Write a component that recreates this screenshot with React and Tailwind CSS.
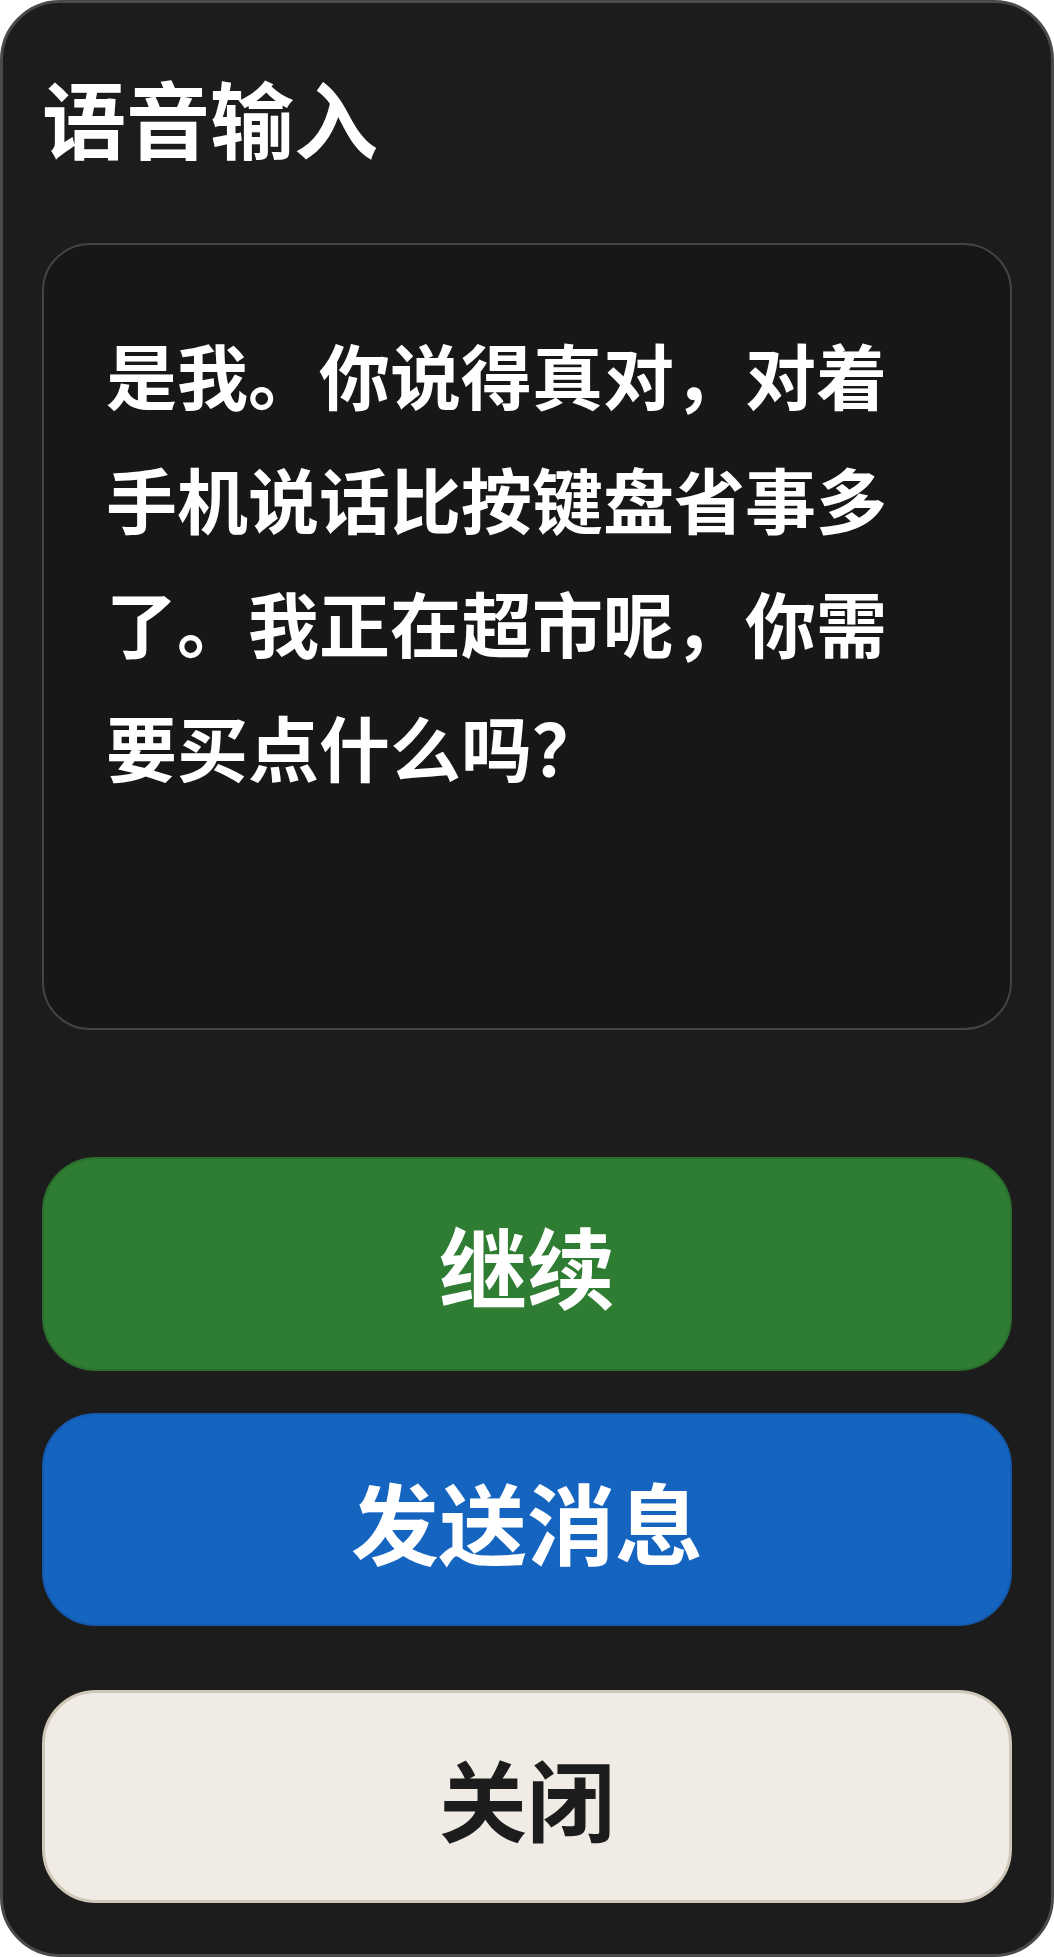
export default function App() {
  const font = { fontFamily: '"Noto Sans CJK SC", "Noto Sans", sans-serif' };
  return (
    <div className="w-[1054px] h-[1957px] bg-white">
      <div
        style={font}
        className="w-full h-full box-border border-[3px] border-[#4a4a4a] rounded-[60px] bg-[#1c1c1c] flex flex-col px-[39px] pt-[72px] pb-[51px]"
      >
        <h1 className="text-[84px] leading-none font-bold text-white m-0">语音输入</h1>
        <div className="mt-[84px] h-[787px] shrink-0 box-border rounded-[48px] border-2 border-[#444444] bg-[#171717] px-[62px] pt-[66px]">
          <p className="text-[71px] leading-[124px] font-bold text-white m-0">
            是我。你说得真对，对着手机说话比按键盘省事多了。我正在超市呢，你需要买点什么吗？
          </p>
        </div>
        <div className="mt-auto flex flex-col">
          <button className="h-[214px] box-border rounded-[54px] border-2 border-[#2a6e2e] bg-[#2e7d32] text-white text-[88px] font-bold flex items-center justify-center">
            继续
          </button>
          <button className="mt-[42px] h-[213px] box-border rounded-[54px] border-2 border-[#1559ae] bg-[#1565c0] text-white text-[88px] font-bold flex items-center justify-center">
            发送消息
          </button>
          <button className="mt-[64px] h-[213px] box-border rounded-[54px] border-[3px] border-[#cfc7b8] bg-[#f0ece5] text-[#1c1c1c] text-[88px] font-bold flex items-center justify-center">
            关闭
          </button>
        </div>
      </div>
    </div>
  );
}
